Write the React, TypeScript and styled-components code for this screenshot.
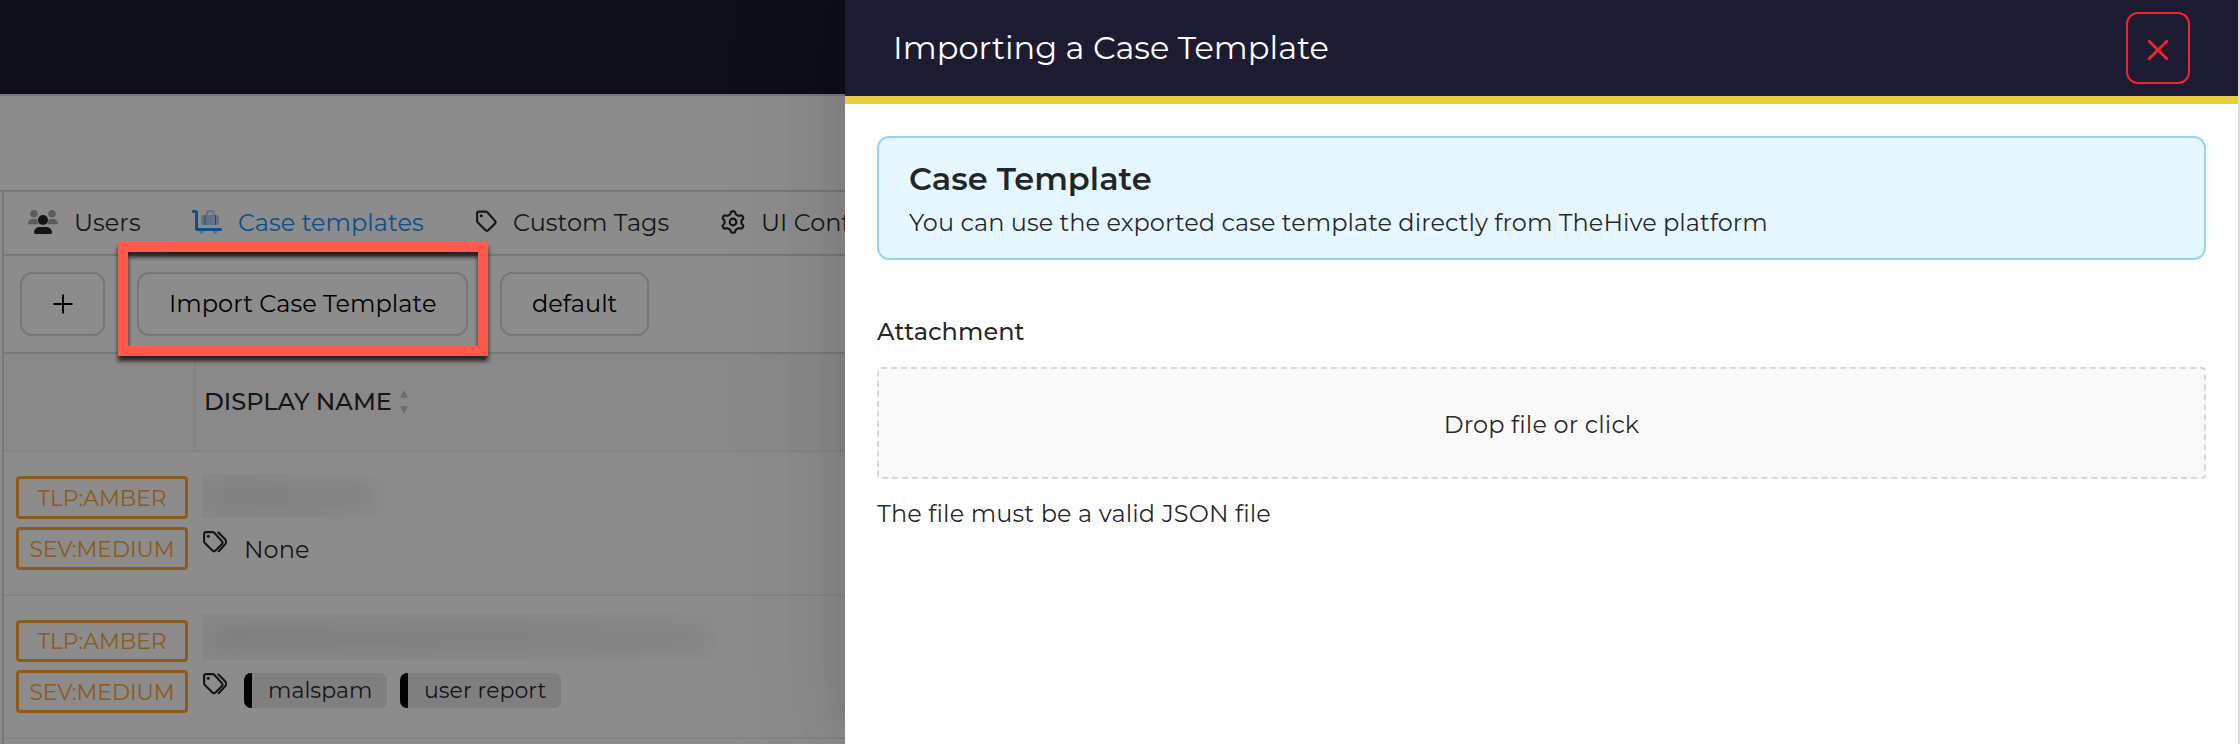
import React from 'react';
import styled, { createGlobalStyle } from 'styled-components';

const Global = createGlobalStyle`
  *, *::before, *::after { box-sizing: border-box; }
  body { margin: 0; background: #fff; }
  button { font: inherit; margin: 0; }
  svg { display: block; flex: none; }
`;

const Stage = styled.div`
  position: relative;
  width: 2240px;
  height: 744px;
  overflow: hidden;
  font-family: Montserrat, Inter, "Liberation Sans", sans-serif;
  font-size: 24px;
  line-height: 36px;
  color: rgba(0, 0, 0, 0.85);
`;

const Text = styled.span<{ $ls?: number; $w?: number; $size?: number }>`
  display: block;
  white-space: nowrap;
  letter-spacing: ${p => p.$ls ?? 0.04}px;
  font-weight: ${p => p.$w ?? 400};
  ${p => (p.$size ? `font-size: ${p.$size}px;` : '')}
`;

/* ---------- page under the mask ---------- */

const Page = styled.div`
  display: flex;
  flex-direction: column;
  height: 100%;
  background: #fff;
`;
const TopBar = styled.header`
  flex: 0 0 94px;
  background: #1b1b31;
`;
const SubBar = styled.div`
  flex: 0 0 98px;
  border-top: 2px solid #d9d9d9;
  border-bottom: 2px solid #d9d9d9;
`;
const Panel = styled.main`
  flex: 1 0 auto;
  margin-left: 2px;
  border-left: 2px solid #d9d9d9;
`;
const Tabs = styled.nav`
  display: flex;
  height: 64px;
  border-bottom: 2px solid #d9d9d9;
`;
const Tab = styled.div<{ $width: number; $active?: boolean }>`
  flex: 0 0 ${p => p.$width}px;
  height: 62px;
  display: flex;
  align-items: center;
  gap: 16px;
  padding: 0 24px;
  color: ${p => (p.$active ? '#1890ff' : 'inherit')};
  border-bottom: 2px solid ${p => (p.$active ? '#e8cf42' : 'transparent')};
`;
const TabLabel = styled(Text)`
  padding-top: 2px;
`;
const Toolbar = styled.div`
  display: flex;
  align-items: center;
  height: 98px;
  gap: 32px;
  padding-left: 16px;
  border-bottom: 2px solid #d9d9d9;
`;
const ToolButton = styled.button<{ $width: number; $pad?: number }>`
  display: flex;
  align-items: center;
  width: ${p => p.$width}px;
  height: 64px;
  padding: 0 0 0 ${p => p.$pad ?? 30}px;
  border: 2px solid #d9d9d9;
  border-radius: 12px;
  background: #fff;
  color: #000;
`;
const TableHead = styled.div`
  display: flex;
  height: 98px;
  background: #fafafa;
  border-bottom: 2px solid #f0f0f0;
`;
const HeadBlank = styled.div`
  width: 192px;
  border-right: 2px solid #f0f0f0;
`;
const HeadName = styled.div`
  display: flex;
  align-items: center;
  gap: 7px;
  padding-left: 8px;
`;
const TableRow = styled.div<{ $height: number; $top: number }>`
  display: flex;
  height: ${p => p.$height}px;
  padding: ${p => p.$top}px 0 0 12px;
  border-bottom: 2px solid #f0f0f0;
`;
const Levels = styled.div`
  display: flex;
  flex-direction: column;
  gap: 8px;
  width: 172px;
`;
const Level = styled.div<{ $height?: number }>`
  display: flex;
  justify-content: center;
  align-items: center;
  height: ${p => p.$height ?? 43}px;
  border: 3px solid #ffa532;
  border-radius: 4px;
  color: #ffa532;
`;
const Details = styled.div`
  display: flex;
  flex-direction: column;
  padding-left: 14px;
`;
const Redacted = styled.div<{ $width: number; $lift: number; $height: number }>`
  width: ${p => p.$width}px;
  height: ${p => p.$height}px;
  margin-top: ${p => -p.$lift}px;
  padding: 12px 28px 10px 10px;
  overflow: hidden;
  background: linear-gradient(90deg, rgba(0, 0, 0, 0.03), rgba(0, 0, 0, 0.015) 70%, transparent);
`;
const Smudge = styled.div`
  height: 100%;
  background: rgba(0, 0, 0, 0.07);
  filter: blur(11px);
`;
const TagLine = styled.div<{ $top: number; $gap: number }>`
  display: flex;
  align-items: flex-start;
  gap: ${p => p.$gap}px;
  margin-top: ${p => p.$top}px;
  padding-left: 1px;
`;
const Chips = styled.div`
  display: flex;
  gap: 13px;
`;
const Chip = styled.div<{ $width: number }>`
  display: flex;
  align-items: center;
  width: ${p => p.$width}px;
  height: 35px;
  padding-left: 16px;
  border-left: 8px solid #000;
  border-radius: 7px;
  background: #e8e8e8;
`;
const NoneLabel = styled.div`
  padding-top: 1px;
`;

/* ---------- layers over the page ---------- */

const Mask = styled.div`
  position: absolute;
  inset: 0;
  background: rgba(0, 0, 0, 0.45);
`;
const Highlight = styled.div`
  position: absolute;
  left: 118px;
  top: 242px;
  width: 370px;
  height: 114px;
  border: 10px solid #ff5a4b;
  filter: drop-shadow(0 5px 2px rgba(0, 0, 0, 0.75));
`;
const Drawer = styled.section`
  position: absolute;
  top: 0;
  right: 2px;
  width: 1393px;
  height: 744px;
  background: #fff;
  box-shadow: -12px 0 32px -16px rgba(0, 0, 0, 0.08), -18px 0 56px rgba(0, 0, 0, 0.05),
    -24px 0 96px 32px rgba(0, 0, 0, 0.03);
`;
const PageEdge = styled.div`
  position: absolute;
  top: 0;
  right: 0;
  width: 2px;
  height: 100%;
  background: #dcdcdc;
`;
const DrawerHead = styled.div`
  display: flex;
  align-items: center;
  justify-content: space-between;
  height: 104px;
  padding: 0 48px;
  background: #1c1b32;
  border-bottom: 8px solid #e8cf42;
  color: #fff;
`;
const CloseButton = styled.button`
  display: flex;
  align-items: center;
  justify-content: center;
  width: 64px;
  height: 72px;
  padding: 4px 0 0;
  border: 2px solid #f5222d;
  border-radius: 12px;
  background: transparent;
  color: #f5222d;
`;
const DrawerBody = styled.div`
  padding: 32px 32px 0 32px;
`;
const Alert = styled.div`
  height: 124px;
  padding: 20px 30px 0;
  border: 2px solid #91d5ff;
  border-radius: 12px;
  background: #e6f7ff;
`;
const AlertTitle = styled.div`
  height: 47px;
  line-height: 42px;
`;
const FieldLabel = styled.div`
  margin-top: 54px;
  height: 53px;
`;
const DropZone = styled.div`
  display: flex;
  align-items: center;
  justify-content: center;
  height: 112px;
  padding-top: 3px;
  border: 2px dashed #d9d9d9;
  border-radius: 4px;
  background: #fafafa;
`;
const Hint = styled.div`
  margin-top: 17px;
`;

/* ---------- icons ---------- */

const UsersIcon = () => (
  <svg width="30" height="24" viewBox="0 0 30 24" fill="currentColor">
    <g opacity="0.4">
      <circle cx="6" cy="3.8" r="3.8" />
      <circle cx="24" cy="3.8" r="3.8" />
      <path d="M0 14.2C0 11 2 9 4.6 9H8c.6 0 1 .1 1.5.3-.3 2 .5 3.7 1.9 4.9H0zM30 14.2C30 11 28 9 25.4 9H22c-.6 0-1 .1-1.5.3.3 2-.5 3.7-1.9 4.9H30z" />
    </g>
    <circle cx="15" cy="10" r="5" />
    <path d="M6 22.8C6 19.3 8.5 17 11.5 17h7C21.5 17 24 19.3 24 22.8c0 .7-.5 1.2-1.2 1.2H7.2C6.5 24 6 23.5 6 22.8z" />
  </svg>
);
const CartIcon = () => (
  <svg width="30" height="24" viewBox="0 0 30 24" fill="none">
    <g opacity="0.5" fill="#6a9ee6">
      <path fillRule="evenodd" d="M14 5V2.6C14 1.1 15.1 0 16.6 0h3.8C21.9 0 23 1.1 23 2.6V5h2c1.4 0 2 .8 2 2v6c0 1.3-.7 2-2 2H11c-1.3 0-2-.7-2-2V7c0-1.2.7-2 2-2h3zm2.3 0h4.4V2.3h-4.4V5z" />
      <circle cx="9.5" cy="22" r="2" />
      <circle cx="23" cy="22" r="2" />
    </g>
    <path d="M13 5v10M23.5 5v10" stroke="currentColor" strokeWidth="1" />
    <path d="M1.4 1.5h2.1c.6 0 1 .4 1 1v16c0 .6.4 1 1 1h23" stroke="currentColor" strokeWidth="3" strokeLinecap="round" />
  </svg>
);
const tagOutline = 'M1.1 3v7.3c0 .6.2 1.2.7 1.7l7.6 7.5c.9.9 2.2.9 3.1 0l6.3-6.3c.9-.9.9-2.2 0-3.1L11.3 1.8c-.5-.5-1-.7-1.7-.7H3c-1.1 0-1.900.8-1.900 1.900z';
const TagIcon = () => (
  <svg width="24" height="24" viewBox="-3 0 24 24" fill="none" stroke="currentColor" strokeWidth="2.1">
    <path d={tagOutline} transform="translate(0 .5)" />
    <circle cx="5.3" cy="5.8" r="1.5" fill="currentColor" stroke="none" />
  </svg>
);
const TagsIcon = () => (
  <svg width="24" height="24" viewBox="0 0 24 24" fill="none" stroke="currentColor" strokeWidth="2.1" strokeLinecap="round">
    <path d={tagOutline} />
    <circle cx="5.3" cy="5.3" r="1.5" fill="currentColor" stroke="none" />
    <path d="M15.4 1.4l6.5 6.7c1.5 1.6 1.5 4 0 5.5l-6.2 6.6" />
  </svg>
);

/* Rim with six blunt teeth, one of them pointing straight up. */
const gearRim = Array.from({ length: 120 }, (_, i) => {
  const a = (i * Math.PI) / 60;
  const r = 9.75 + 1.45 * Math.tanh(2.2 * Math.cos(6 * a) - 0.3);
  return `${(12.5 + 1.06 * r * Math.sin(a)).toFixed(2)},${(12.5 - r * Math.cos(a)).toFixed(2)}`;
}).join(' ');
const GearIcon = () => (
  <svg width="24" height="24" viewBox="0 0 25 25" fill="none" stroke="currentColor" strokeWidth="2.2" strokeLinejoin="round">
    <polygon points={gearRim} />
    <circle cx="12.5" cy="12.5" r="3.5" />
  </svg>
);
const PlusIcon = () => (
  <svg width="20" height="20" viewBox="0 0 20 20" stroke="currentColor" strokeWidth="2">
    <path d="M10 .5v19M.5 10h19" />
  </svg>
);
const CloseIcon = () => (
  <svg width="22" height="22" viewBox="0 0 22 22" stroke="currentColor" strokeWidth="2.8" strokeLinecap="round">
    <path d="M2.2 2.2l17.6 17.6M19.8 2.2L2.2 19.8" />
  </svg>
);
const SortIcon = () => (
  <svg width="10" height="26" viewBox="0 0 10 26" fill="#c6c6c6">
    <path d="M5 .8l4 8H1zM5 25l4-8H1z" />
  </svg>
);

const LevelPair = ({ first }: { first?: number }) => (
  <Levels>
    <Level $height={first}><Text $size={21.8} $ls={0}>TLP:AMBER</Text></Level>
    <Level><Text $size={21.8} $ls={0}>SEV:MEDIUM</Text></Level>
  </Levels>
);

export default function App() {
  return (
    <Stage>
      <Global />
      <Page>
        <TopBar />
        <SubBar />
        <Panel>
          <Tabs>
            <Tab $width={164}><UsersIcon /><TabLabel>Users</TabLabel></Tab>
            <Tab $width={281} $active><CartIcon /><TabLabel>Case templates</TabLabel></Tab>
            <Tab $width={248}><TagIcon /><TabLabel>Custom Tags</TabLabel></Tab>
            <Tab $width={320}><GearIcon /><TabLabel>UI Conf</TabLabel></Tab>
          </Tabs>
          <Toolbar>
            <ToolButton $width={85} $pad={31} aria-label="Add"><PlusIcon /></ToolButton>
            <ToolButton $width={331}><Text>Import Case Template</Text></ToolButton>
            <ToolButton $width={149}><Text>default</Text></ToolButton>
          </Toolbar>
          <TableHead>
            <HeadBlank />
            <HeadName><Text $w={500} $ls={0}>DISPLAY NAME</Text><SortIcon /></HeadName>
          </TableHead>
          <TableRow $height={144} $top={24}>
            <LevelPair />
            <Details>
              <Redacted $width={200} $height={44} $lift={2}><Smudge /></Redacted>
              <TagLine $top={13} $gap={17}>
                <TagsIcon />
                <NoneLabel><Text>None</Text></NoneLabel>
              </TagLine>
            </Details>
          </TableRow>
          <TableRow $height={143} $top={24}>
            <LevelPair first={42} />
            <Details>
              <Redacted $width={534} $height={46} $lift={6}><Smudge /></Redacted>
              <TagLine $top={13} $gap={17}>
                <TagsIcon />
                <Chips>
                  <Chip $width={143}><Text $size={22}>malspam</Text></Chip>
                  <Chip $width={161}><Text $size={22}>user report</Text></Chip>
                </Chips>
              </TagLine>
            </Details>
          </TableRow>
        </Panel>
      </Page>
      <Mask />
      <Highlight />
      <Drawer>
        <DrawerHead>
          <Text $size={32}>Importing a Case Template</Text>
          <CloseButton aria-label="Close"><CloseIcon /></CloseButton>
        </DrawerHead>
        <DrawerBody>
          <Alert>
            <AlertTitle><Text $size={32} $w={600}>Case Template</Text></AlertTitle>
            <Text>You can use the exported case template directly from TheHive platform</Text>
          </Alert>
          <FieldLabel><Text $w={500}>Attachment</Text></FieldLabel>
          <DropZone><Text $ls={0.12}>Drop file or click</Text></DropZone>
          <Hint><Text $ls={0.12}>The file must be a valid JSON file</Text></Hint>
        </DrawerBody>
      </Drawer>
      <PageEdge />
    </Stage>
  );
}
